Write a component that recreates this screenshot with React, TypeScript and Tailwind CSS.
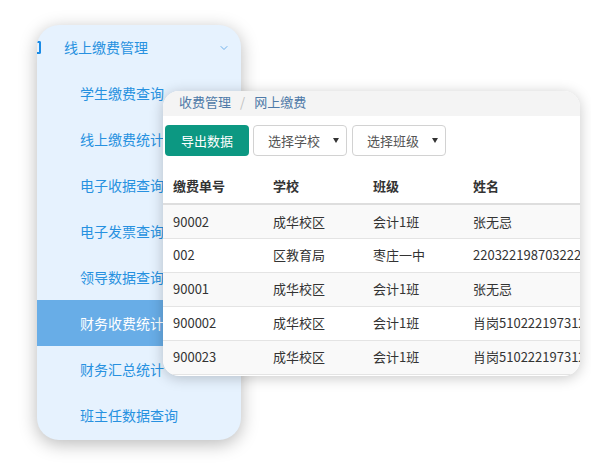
import { ChevronDown } from 'lucide-react';

const MENU = [
  '学生缴费查询',
  '线上缴费统计',
  '电子收据查询',
  '电子发票查询',
  '领导数据查询',
  '财务收费统计',
  '财务汇总统计',
  '班主任数据查询',
];

const ROWS = [
  ['90002', '成华校区', '会计1班', '张无忌'],
  ['002', '区教育局', '枣庄一中', '220322198703222211'],
  ['90001', '成华校区', '会计1班', '张无忌'],
  ['900002', '成华校区', '会计1班', '肖岗510222197312'],
  ['900023', '成华校区', '会计1班', '肖岗510222197312'],
];

const FONT = "font-['Noto_Sans_CJK_SC',sans-serif]";

function Sidebar() {
  return (
    <aside className="ml-[37px] mt-[25px] h-[415px] w-[204px] overflow-hidden rounded-[22px] bg-[#e6f2fe] shadow-[0_4px_18px_rgba(0,0,0,0.28)]">
      <div className="flex h-[45px] items-center pr-[11px]">
        <span className="h-[13px] w-[4px] rounded-r-[2px] border-2 border-l-0 border-[#1a8be6]" />
        <span className="ml-[23px] flex-1 text-[14px] text-[#2791e0]">线上缴费管理</span>
        <ChevronDown className="h-3 w-3 text-[#6fb0ea]" strokeWidth={2} />
      </div>
      {MENU.map((label) => {
        const active = label === '财务收费统计';
        return (
          <div
            key={label}
            className={`flex h-[46px] items-center pl-[43px] text-[14px] ${
              active ? 'bg-[#68ade7] text-white' : 'text-[#2791e0]'
            }`}
          >
            {label}
          </div>
        );
      })}
    </aside>
  );
}

function Select({ label }: { label: string }) {
  return (
    <div className="flex h-[31px] w-[94px] items-center justify-between rounded-[4px] border border-[#d2d2d2] bg-white pl-[14px] pr-[7px] text-[13px] text-[#555]">
      <span>{label}</span>
      <span className="h-0 w-0 border-x-[3px] border-t-[5px] border-x-transparent border-t-[#333]" />
    </div>
  );
}

function PaymentCard() {
  return (
    <section className="absolute left-[163px] top-[91px] h-[285px] w-[417px] overflow-hidden rounded-[16px] bg-white shadow-[0_2px_14px_rgba(0,0,0,0.22)]">
      <div className="flex h-[25px] items-center gap-[9px] bg-[#f4f4f4] pl-[16px] pb-[4px] text-[13px]">
        <span className="text-[#4f7aa8]">收费管理</span>
        <span className="text-[#c0c0c0]">/</span>
        <span className="text-[#4f7aa8]">网上缴费</span>
      </div>
      <div className="flex gap-[4px] pl-[2px] pt-[9px]">
        <button className="h-[31px] w-[84px] rounded-[4px] bg-[#0c9882] text-[13px] text-white">导出数据</button>
        <Select label="选择学校" />
        <div className="ml-[1px]">
          <Select label="选择班级" />
        </div>
      </div>
      <table className="mt-[13px] w-[600px] table-fixed border-collapse text-left text-[13px] text-[#333]">
        <colgroup>
          <col className="w-[100px]" />
          <col className="w-[100px]" />
          <col className="w-[100px]" />
          <col className="w-[300px]" />
        </colgroup>
        <thead>
          <tr className="h-[35px] border-b-2 border-[#dedede]">
            {['缴费单号', '学校', '班级', '姓名'].map((h) => (
              <th key={h} className="whitespace-nowrap pl-[10px] font-bold">
                {h}
              </th>
            ))}
          </tr>
        </thead>
        <tbody>
          {ROWS.map((row, i) => (
            <tr
              key={row[0]}
              className={`h-[34px] border-b border-[#e4e4e4] ${i % 2 === 0 ? 'bg-[#f9f9f9]' : 'bg-white'}`}
            >
              {row.map((cell, j) => (
                <td key={j} className="whitespace-nowrap pl-[10px]">
                  {cell}
                </td>
              ))}
            </tr>
          ))}
        </tbody>
      </table>
    </section>
  );
}

export default function App() {
  return (
    <div className={`relative h-[464px] w-[591px] overflow-hidden bg-white ${FONT}`}>
      <Sidebar />
      <PaymentCard />
    </div>
  );
}
